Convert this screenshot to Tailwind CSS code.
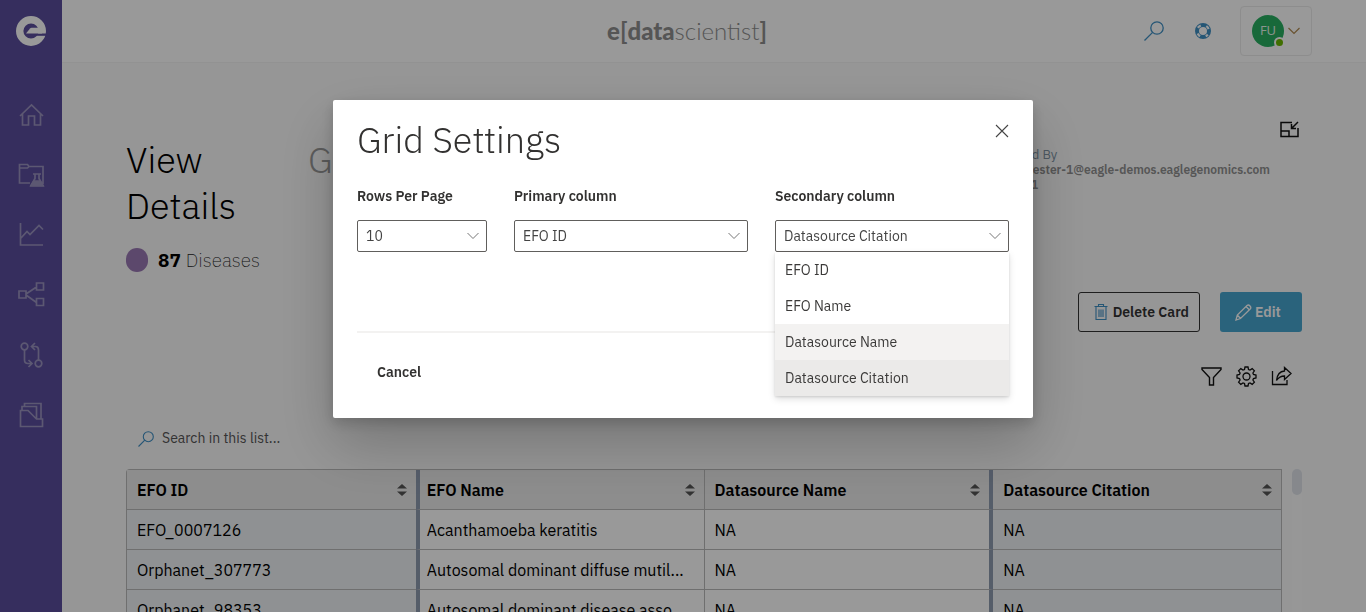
<!DOCTYPE html>
<html lang="en">
<head>
<meta charset="utf-8">
<title>e[datascientist]</title>
<script src="https://cdn.jsdelivr.net/npm/@tailwindcss/browser@4"></script>
</head>
<body class="h-screen overflow-hidden bg-[#fafafa] font-['IBM_Plex_Sans','Roboto',sans-serif] text-black">
<div class="flex h-screen">
  <nav class="flex w-[62px] shrink-0 flex-col items-center bg-[#5a4d9d] pt-4 text-[#9a93bf]" aria-label="Main">
    <a href="#" aria-label="Home page">
      <svg class="size-[30px]" viewBox="0 0 30 30" fill="none"><circle cx="15" cy="15" r="11.300" stroke="#fff" stroke-width="7.400"/><path d="M18 17.500h13v2.300H18z" fill="#5a4d9d"/><path d="M10 17.500 14 12.500q.6-.7 1.600-.7H26v5.700z" fill="#fff"/></svg>
    </a>
    <div class="mt-[55px] flex flex-col gap-8">
      <a href="#" aria-label="Home"><svg class="size-7" viewBox="0 0 28 28" fill="none" stroke="currentColor" stroke-width="1.700"><path d="M3 15 14.500 4 26 15M5.500 13v11h6v-9h6v9h6V13"/></svg></a>
      <a href="#" aria-label="Projects"><svg class="size-7" viewBox="0 0 28 28" fill="none" stroke="currentColor" stroke-width="1.700"><path d="M13 22H2.500V3.500h8L12 5.500h14V23M2.500 7h8L12 5.500M16 13h8M18 13v4.500l-4 7h12l-4-7V13"/><path d="m17 20-3 5h12l-3-5z" fill="currentColor"/></svg></a>
      <a href="#" aria-label="Charts"><svg class="size-7" viewBox="0 0 28 28" fill="none" stroke="currentColor" stroke-width="1.700"><path d="M3.500 2v22H26M4 17l6-6.500 3 3 9-9 4 4"/></svg></a>
      <a href="#" aria-label="Network"><svg class="size-7" viewBox="0 0 28 28" fill="none" stroke="currentColor" stroke-width="1.700"><path d="M2 10h7v7H2zM19.500 2h7v7h-7zM19.500 17.500h7v7h-7zM9 13l10.500-7M9 14l10.500 7.500"/></svg></a>
      <a href="#" aria-label="Versions"><svg class="size-7" viewBox="0 0 28 28" fill="none" stroke="currentColor" stroke-width="1.700"><circle cx="7.500" cy="5.500" r="3.300"/><circle cx="21.500" cy="22.500" r="3.300"/><path d="M7.500 9v10q0 3.500 3.500 3.500h3.500M11.500 19l3.500 3.500-3.500 3.500M21.500 19V9q0-3.500-3-3.500h-3.500M18 2l-3.500 3.500L18 9"/></svg></a>
      <a href="#" aria-label="Files"><svg class="size-7" viewBox="0 0 28 28" fill="none" stroke="currentColor" stroke-width="1.700"><path d="M3.500 9.500v16h22V18h-6l-8.500-8.500zM5 9.500V5.500h14.500V18M7.500 5.500V2.500H24V18"/></svg></a>
    </div>
  </nav>

  <div class="flex min-w-0 flex-1 flex-col">
    <header class="flex h-[63px] shrink-0 items-center border-b border-[#f3f3f3] bg-white pr-[54px]">
      <div class="flex-1"></div>
      <div class="font-['Lato',sans-serif] text-[24px] leading-none text-[#8e8e8e]"><b class="font-black">e</b><span class="font-bold">[</span><b class="font-black">data</b><span class="font-light">scientist</span><span class="font-bold">]</span></div>
      <div class="flex flex-1 items-center justify-end">
        <button aria-label="Search" class="mr-[31px]"><svg class="size-5" viewBox="0 0 20 20" fill="none" stroke="#3f8fc4" stroke-width="1.300"><circle cx="13" cy="7" r="6.200"/><path d="M8.600 11.400.5 19.500"/></svg></button>
        <button aria-label="Help" class="mr-[29px]"><svg class="size-4" viewBox="0 0 16 16" fill="none"><circle cx="8" cy="8" r="6" stroke="#3f8fc4" stroke-width="4"/><circle cx="8" cy="8" r="5.900" stroke="#fff" stroke-width="2.200" stroke-dasharray="3.800 5.470" stroke-dashoffset="1.900" transform="rotate(45 8 8)"/></svg></button>
        <button class="flex h-[50px] w-[72px] items-center justify-center gap-1 rounded border border-[#ebebeb]" aria-label="Account">
          <span class="relative grid size-8 place-items-center rounded-full bg-[#28b062] font-['Open_Sans',sans-serif] text-[13px] text-[#e8f7ee]">FU<span class="absolute -right-px -bottom-px size-[11px] rounded-full border-2 border-white bg-[#6bb700]"></span></span>
          <svg class="h-2 w-3" viewBox="0 0 12 8" fill="none" stroke="#b08a50" stroke-width="1.200"><path d="m.5 1 5.500 5.500L11.500 1"/></svg>
        </button>
      </div>
    </header>

    <main class="px-16 pt-[57px]">
      <div class="flex h-[172px]">
        <section class="w-[182px] shrink-0 pt-[17px]">
          <h1 class="w-[140px] text-[36px] leading-[46px] font-light">View Details</h1>
          <p class="mt-[19px] flex items-center text-[19px] leading-6 font-extralight text-[#222]"><span class="mr-[10px] h-6 w-[22px] rounded-full bg-[#9a78b4]"></span><b class="mr-[5px] font-bold text-black">87</b>Diseases</p>
        </section>
        <p class="pt-[17px] text-[36px] leading-[46px] font-light text-[#999]">G</p>
        <div class="ml-auto flex gap-[10px]">
          <div class="pt-[27px] text-[12px] leading-[15px] text-[#8f8f8f]"><p class="text-[13px] text-[#8194a5]">Created By</p><p class="font-semibold">eagle-tester-1@eagle-demos.eaglegenomics.com</p><p class="font-semibold">tester-1</p></div>
          <button aria-label="Collapse" class="mt-px mr-[3px] h-[18px]"><svg class="size-[19px]" viewBox="0 0 19 19" fill="none" stroke="#111" stroke-width="1.500"><path d="M12 1.500H1v14h17V7M1 10h8v5.500M18 1l-6.500 6.500M11.500 3v4.500H16"/></svg></button>
        </div>
      </div>
      <div class="flex justify-end gap-5 text-[14px] font-semibold">
        <button class="flex h-10 w-[122px] items-center justify-end gap-[5px] rounded-[3px] border border-[#333] pr-[10px] text-[#333]"><svg class="h-4 w-[14px]" viewBox="0 0 14 16" fill="none" stroke="#3f8fc4" stroke-width="1.100"><path d="M.5 2.500h13M4.500 2.500v-2h5v2M2 2.500v13h10v-13M5 5.500v7.500M7 5.500v7.500M9 5.500v7.500"/></svg>Delete Card</button>
        <button class="flex h-10 w-[82px] items-center gap-[3px] rounded-[3px] bg-[#46a5cf] pl-[15px] text-white"><svg class="size-[17px]" viewBox="0 0 17 17" fill="none" stroke="#fff" stroke-width="1.300"><path d="m1 16 1.300-5L12 1.500q1.500-1.200 3 .5t.2 3L5.500 14.500zM11 2.500 14.500 6M2.300 11l3.200 3.500"/></svg>Edit</button>
      </div>
      <div class="mt-[34px] mr-[10px] flex justify-end gap-[14px]">
        <button aria-label="Filter"><svg class="size-[21px]" viewBox="0 0 21 21" fill="none" stroke="#111" stroke-width="1.400"><path d="M1 2h19v1.500l-7.500 8V19h-4v-7.500L1 3.500z"/></svg></button>
        <button aria-label="Grid settings"><svg class="size-[21px]" viewBox="0 0 21 21" fill="none" stroke="#111" stroke-width="1.300"><circle cx="10.500" cy="10.500" r="3.500"/><path d="M9 1h3l.5 2.500 1.500.6 2.200-1.500 2.200 2.200-1.500 2.200.6 1.500L20 9v3l-2.500.5-.6 1.500 1.500 2.200-2.200 2.200-2.200-1.500-1.500.6L12 20H9l-.5-2.500-1.500-.6-2.200 1.500-2.200-2.200 1.500-2.200-.6-1.500L1 12V9l2.500-.5.6-1.500-1.500-2.200 2.200-2.200L7 4.100l1.500-.6z"/></svg></button>
        <button aria-label="Share"><svg class="size-[21px]" viewBox="0 0 21 21" fill="none" stroke="#111" stroke-width="1.300"><path d="M1.500 5v13.500H16V14M13.500 1.500 20 7.500l-6.500 6V10q-5 0-8 4.500Q6.500 5.500 13.500 5z"/></svg></button>
      </div>
      <label class="mt-[39px] ml-3 flex h-[26px] items-center gap-2 pb-px"><svg class="size-4" viewBox="0 0 16 16" fill="none" stroke="#3f8fc4" stroke-width="1.100"><circle cx="10.300" cy="5.700" r="5"/><path d="M6.800 9.200.5 15.500"/></svg><input type="text" aria-label="Search in this list" placeholder="Search in this list..." class="w-60 bg-transparent text-[14px] outline-none placeholder:text-[#555]"></label>
      <div class="mt-[17px] flex gap-[10px]">
        <table class="w-full min-w-0 flex-1 table-fixed border-separate border-spacing-0 rounded-tl border-t border-l border-[#b9b9b9] text-left text-[16px] [&_td]:h-10 [&_td]:truncate [&_td]:border-r [&_td]:border-b [&_td]:border-[#b9b9b9] [&_td]:px-[10px] [&_th]:h-10 [&_th]:border-r [&_th]:border-b [&_th]:border-[#b9b9b9] [&_th]:bg-[#ebebeb] [&_th]:pr-[9px] [&_th]:pl-[10px] [&_th]:font-semibold [&_tr>*:nth-child(1)]:border-r-0 [&_tr>*:nth-child(2)]:border-l-4 [&_tr>*:nth-child(2)]:border-l-[#8e9bb0] [&_tr>*:nth-child(2)]:pl-[7px] [&_tr>*:nth-child(3)]:border-r-4 [&_tr>*:nth-child(3)]:border-r-[#8e9bb0]">
          <thead><tr>
            <th><div class="flex items-center justify-between">EFO ID<svg class="h-3 w-[10px]" viewBox="0 0 10 12" fill="#555"><path d="M0 4.500 5 0l5 4.500zM0 7.500 5 12l5-4.500z"/></svg></div></th>
            <th><div class="flex items-center justify-between">EFO Name<svg class="h-3 w-[10px]" viewBox="0 0 10 12" fill="#555"><path d="M0 4.500 5 0l5 4.500zM0 7.500 5 12l5-4.500z"/></svg></div></th>
            <th><div class="flex items-center justify-between">Datasource Name<svg class="h-3 w-[10px]" viewBox="0 0 10 12" fill="#555"><path d="M0 4.500 5 0l5 4.500zM0 7.500 5 12l5-4.500z"/></svg></div></th>
            <th><div class="flex items-center justify-between">Datasource Citation<svg class="h-3 w-[10px]" viewBox="0 0 10 12" fill="#555"><path d="M0 4.500 5 0l5 4.500zM0 7.500 5 12l5-4.500z"/></svg></div></th>
          </tr></thead>
          <tbody>
            <tr><td class="bg-[#eff2f5]">EFO_0007126</td><td class="bg-white">Acanthamoeba keratitis</td><td class="bg-white">NA</td><td class="bg-[#eff2f5]">NA</td></tr>
            <tr><td class="bg-[#eff2f5]">Orphanet_307773</td><td class="bg-white">Autosomal dominant diffuse mutil...</td><td class="bg-white">NA</td><td class="bg-[#eff2f5]">NA</td></tr>
            <tr><td class="bg-[#eff2f5]">Orphanet_98353</td><td class="bg-white">Autosomal dominant disease asso...</td><td class="bg-white">NA</td><td class="bg-[#eff2f5]">NA</td></tr>
          </tbody>
        </table>
        <div class="w-[10px] shrink-0 rounded-full bg-[#fcfcfc]"><div class="h-[26px] rounded-full bg-[#dfe3ea]"></div></div>
      </div>
    </main>
  </div>
</div>

<div class="fixed inset-0 flex items-start justify-center bg-black/40 pt-[100px]">
  <section role="dialog" aria-labelledby="dlg" class="w-[700px] max-w-full rounded-[2px] bg-white px-6 pb-[30px] text-[#323130] shadow-[0_26px_58px_rgba(0,0,0,0.22),0_5px_14px_rgba(0,0,0,0.18)]">
    <div class="flex justify-between">
      <h2 id="dlg" class="pt-4 text-[36px] leading-[48px] font-light">Grid Settings</h2>
      <button aria-label="Close" class="mt-[15px] h-8"><svg class="size-[14px]" viewBox="0 0 14 14" fill="none" stroke="#444" stroke-width="1.100"><path d="m1 1 12 12M13 1 1 13"/></svg></button>
    </div>
    <div class="mt-[22px] grid grid-cols-[130fr_234fr_234fr] gap-[27px] text-[14px]">
      <div>
        <label for="rows" class="block leading-5 font-semibold">Rows Per Page</label>
        <div class="relative mt-[14px]"><select id="rows" class="h-8 w-full appearance-none rounded-[2px] border border-[#605e5c] bg-white px-2 text-[#444]"><option>10</option></select><svg class="pointer-events-none absolute top-3 right-2 h-2 w-3" viewBox="0 0 12 8" fill="none" stroke="#777"><path d="m.5 1 5.500 5.500L11.500 1"/></svg></div>
      </div>
      <div>
        <label for="primary" class="block leading-5 font-semibold">Primary column</label>
        <div class="relative mt-[14px]"><select id="primary" class="h-8 w-full appearance-none rounded-[2px] border border-[#605e5c] bg-white px-2 text-[#444]"><option>EFO ID</option></select><svg class="pointer-events-none absolute top-3 right-2 h-2 w-3" viewBox="0 0 12 8" fill="none" stroke="#777"><path d="m.5 1 5.500 5.500L11.500 1"/></svg></div>
      </div>
      <div>
        <label for="secondary" class="block leading-5 font-semibold">Secondary column</label>
        <div class="relative mt-[14px]"><select id="secondary" class="h-8 w-full appearance-none rounded-[2px] border border-[#605e5c] bg-white px-2 text-[#444]"><option>Datasource Citation</option></select><svg class="pointer-events-none absolute top-3 right-2 h-2 w-3" viewBox="0 0 12 8" fill="none" stroke="#777"><path d="m.5 1 5.500 5.500L11.500 1"/></svg>
          <ul role="listbox" aria-label="Secondary column" class="absolute inset-x-0 top-full z-10 bg-white leading-9 text-[#3b3a39] shadow-[0_3px_7px_rgba(0,0,0,0.13),0_1px_2px_rgba(0,0,0,0.11)]">
            <li role="option" class="px-[10px]">EFO ID</li>
            <li role="option" class="px-[10px]">EFO Name</li>
            <li role="option" class="bg-[#f3f2f1] px-[10px]">Datasource Name</li>
            <li role="option" aria-selected="true" class="bg-[#ebeae9] px-[10px]">Datasource Citation</li>
          </ul>
        </div>
      </div>
    </div>
    <div class="mt-[79px] border-t-2 border-[#f3f2f1] pt-[23px]">
      <button class="h-8 px-5 text-[14px] font-semibold">Cancel</button>
    </div>
  </section>
</div>
</body>
</html>
